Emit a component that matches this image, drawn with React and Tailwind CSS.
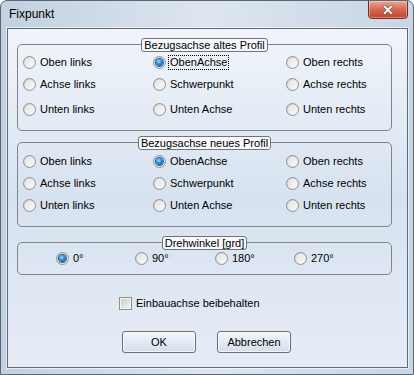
import React from "react";

const font = { fontFamily: '"Liberation Sans", Arial, sans-serif' };

function Radio({ checked }) {
  return (
    <span className="flex h-[13px] w-[13px] shrink-0 items-center justify-center rounded-full border border-[#929292] bg-gradient-to-br from-[#cfcfcf] to-[#fafafa]">
      <span className="flex h-[9px] w-[9px] items-center justify-center rounded-full bg-gradient-to-br from-[#e4e4e4] to-[#f9f9f9]">
        {checked && (
          <span className="h-[7px] w-[7px] rounded-full bg-[radial-gradient(circle_at_40%_35%,#a8dcff_0%,#2a86d0_45%,#0d4f8f_100%)] shadow-[0_0_0_1px_#1b5d99]" />
        )}
      </span>
    </span>
  );
}

function Option({ label, checked, focus }) {
  return (
    <div className="flex h-4 items-center gap-[2px]">
      <Radio checked={checked} />
      <span
        className={
          "text-[11px] leading-[13px] text-black " +
          (focus ? "border border-dotted border-black px-[1px]" : "px-[2px]")
        }
      >
        {label}
      </span>
    </div>
  );
}

function Group({ title, className, children }) {
  return (
    <div
      className={
        "relative ml-[9px] w-[375px] rounded-[5px] border border-[#80858c] " +
        className
      }
    >
      <div className="absolute left-0 right-0 top-[-7px] flex justify-center">
        <span className="h-[14px] rounded-[3px] border border-[#6f747a] bg-[#f6f8fb] px-[2px] text-[11px] leading-[12px] text-black">
          {title}
        </span>
      </div>
      {children}
    </div>
  );
}

function Grid3({ checkedFocus, gaps }) {
  const rows = [
    ["Oben links", "ObenAchse", "Oben rechts"],
    ["Achse links", "Schwerpunkt", "Achse rechts"],
    ["Unten links", "Unten Achse", "Unten rechts"],
  ];
  return (
    <div className="flex flex-col pl-[5px]">
      {rows.map((row, i) => (
        <div
          key={i}
          className={"grid grid-cols-[130px_133px_1fr] " + (i > 0 ? gaps[i - 1] : "")}
        >
          {row.map((label, j) => (
            <Option
              key={j}
              label={label}
              checked={i === 0 && j === 1}
              focus={checkedFocus && i === 0 && j === 1}
            />
          ))}
        </div>
      ))}
    </div>
  );
}

export default function App() {
  return (
    <div
      className="relative h-[375px] w-[414px] overflow-hidden rounded-t-[7px] border border-[#5b6573] bg-gradient-to-r from-[#c2d0df] via-[#dde6f0] to-[#c8d5e3]"
      style={font}
    >
      {/* title bar */}
      <div className="flex h-[27px] items-start justify-between">
        <span className="ml-[8px] mt-[6px] text-[12px] leading-[14px] text-black">Fixpunkt</span>
        <div className="mr-[5px] mt-[-1px] flex h-[19px] w-[40px] items-center justify-center rounded-b-[4px] border border-[#7a2a1c] bg-gradient-to-b from-[#e9a996] via-[#d4674f] to-[#c2432b] shadow-[inset_0_0_0_1px_rgba(255,255,255,0.35)]">
          <span className="text-[14px] font-bold leading-[14px] text-white [text-shadow:0_0_1px_#4a1a10,0_0_1px_#4a1a10]">
            ✕
          </span>
        </div>
      </div>

      {/* client */}
      <div className="ml-[6px] h-[340px] w-[401px] border border-[#5f6b7a] bg-gradient-to-b from-[#f1f5fa] via-[#d7e2f0] to-[#e6ecf6] shadow-[0_0_0_1px_rgba(255,255,255,0.6)]">
        <Group title="Bezugsachse altes Profil" className="mt-[15px] h-[87px] pt-[9px]">
          <Grid3 checkedFocus gaps={["mt-[6px]", "mt-[9px]"]} />
        </Group>

        <Group title="Bezugsachse neues Profil" className="mt-[11px] h-[85px] pt-[10px]">
          <Grid3 gaps={["mt-[6px]", "mt-[6px]"]} />
        </Group>

        <Group title="Drehwinkel [grd]" className="mt-[15px] h-[33px] pt-[7px]">
          <div className="grid grid-cols-[79px_80px_79px_1fr] pl-[38px]">
            <Option label="0°" checked />
            <Option label="90°" />
            <Option label="180°" />
            <Option label="270°" />
          </div>
        </Group>

        <div className="ml-[111px] mt-[22px] flex items-center gap-[4px]">
          <span className="flex h-[13px] w-[13px] items-center justify-center border border-[#8e8f8f] bg-[#f4f4f4]">
            <span className="h-[9px] w-[9px] bg-gradient-to-br from-[#cbcbcb] to-[#f4f4f4]" />
          </span>
          <span className="text-[11px] leading-[13px] text-black">Einbauachse beibehalten</span>
        </div>

        <div className="ml-[114px] mt-[21px] flex gap-[21px]">
          {["OK", "Abbrechen"].map((t) => (
            <button
              key={t}
              className="flex h-[22px] w-[74px] items-center justify-center rounded-[3px] border border-[#707070] bg-gradient-to-b from-[#f3f6fa] via-[#e4ebf4] to-[#d3deeb] text-[11px] text-black shadow-[inset_0_0_0_1px_rgba(255,255,255,0.7)]"
            >
              {t}
            </button>
          ))}
        </div>
      </div>
    </div>
  );
}
